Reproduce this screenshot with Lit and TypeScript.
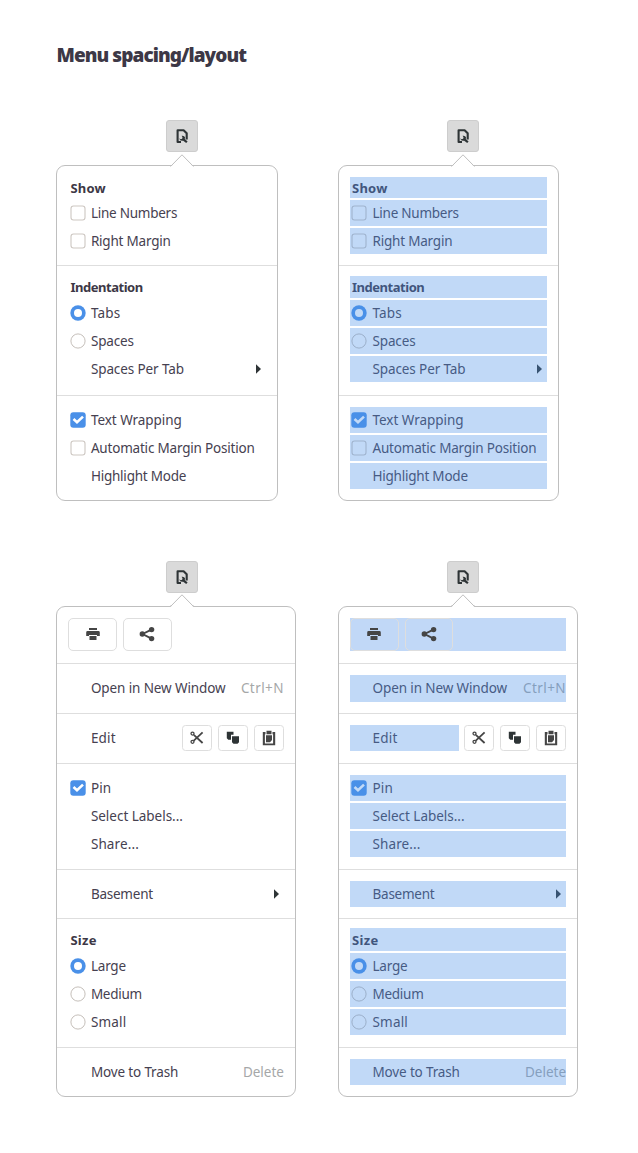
import { LitElement, html, svg, css, nothing } from "lit";
import { customElement, property } from "lit/decorators.js";
import { classMap } from "lit/directives/class-map.js";
import { styleMap } from "lit/directives/style-map.js";

type Mark = "check" | "checked" | "radio" | "selected";
interface Row {
  kind?: "item" | "header" | "toolbar" | "edit";
  label?: string;
  w?: number;
  mark?: Mark;
  arrow?: boolean;
  accel?: string;
  accelW?: number;
  h?: number;
}
interface Section { height: number; pad: number; rows: Row[] }

const settings: Section[] = [
  { height: 98.4, pad: 11.3, rows: [
    { kind: "header", label: "Show", w: 35.5, h: 20.7 },
    { label: "Line Numbers", w: 86.3, mark: "check" },
    { label: "Right Margin", w: 79.8, mark: "check" },
  ] },
  { height: 128.3, pad: 9.4, rows: [
    { kind: "header", label: "Indentation", w: 72.3, h: 22.2 },
    { label: "Tabs", w: 29.5, mark: "selected" },
    { label: "Spaces", w: 43, mark: "radio" },
    { label: "Spaces Per Tab", w: 93, arrow: true },
  ] },
  { height: 104.2, pad: 10.9, rows: [
    { label: "Text Wrapping", w: 91, mark: "checked" },
    { label: "Automatic Margin Position", w: 163.8, mark: "check" },
    { label: "Highlight Mode", w: 95.3 },
  ] },
];

const actions: Section[] = [
  { height: 55.9, pad: 11, rows: [{ kind: "toolbar", h: 33.6 }] },
  { height: 48.7, pad: 11, rows: [{ label: "Open in New Window", w: 134.6, accel: "Ctrl+N", accelW: 43 }] },
  { height: 48.7, pad: 11, rows: [{ kind: "edit", label: "Edit", w: 25 }] },
  { height: 104.9, pad: 10.8, rows: [
    { label: "Pin", w: 20.5, mark: "checked" },
    { label: "Select Labels...", w: 92 },
    { label: "Share...", w: 48 },
  ] },
  { height: 48.7, pad: 11, rows: [{ label: "Basement", w: 62, arrow: true }] },
  { height: 127.3, pad: 9, rows: [
    { kind: "header", label: "Size", w: 26.5, h: 22.6 },
    { label: "Large", w: 35, mark: "selected" },
    { label: "Medium", w: 51, mark: "radio" },
    { label: "Small", w: 35.5, mark: "radio" },
  ] },
  { height: 48.5, pad: 11, rows: [{ label: "Move to Trash", w: 87.3, accel: "Delete", accelW: 41 }] },
];

/** A single line of text whose tracking is tuned to a given width. */
@customElement("tracked-text")
class TrackedText extends LitElement {
  @property() text = "";
  @property({ type: Number }) w = 0;
  static styles = css`
    :host { display: block; white-space: nowrap; flex: none; }
    .run { display: inline-block; white-space: pre; }
  `;
  updated() {
    const run = this.renderRoot.querySelector(".run") as HTMLElement;
    run.style.letterSpacing = "0px";
    const natural = run.getBoundingClientRect().width;
    if (this.w) run.style.letterSpacing = `${(this.w - natural) / this.text.length}px`;
  }
  render() { return html`<span class="run">${this.text}</span>`; }
}

const glyphs = {
  print: svg`<path fill="#454545" d="M4 2h8v2H4zM2.600 5h10.800q1.400 0 1.400 1.400V10H12V9H4v1H1.200V6.400Q1.200 5 2.600 5zM4.500 10h7v4h-7z"/>`,
  share: svg`<path d="M12.500 3.600 3.600 8l8.900 4.600" stroke="#454545" stroke-width="1.900" fill="none"/><circle cx="12.600" cy="3.600" r="2.700" fill="#454545"/><circle cx="3.300" cy="8" r="2.700" fill="#454545"/><circle cx="12.600" cy="12.600" r="2.700" fill="#454545"/>`,
  cut: svg`<g fill="none" stroke="#454545"><circle cx="3.500" cy="3.600" r="1.500" stroke-width="1.300"/><circle cx="3.500" cy="11.800" r="1.500" stroke-width="1.300"/><path d="M4.800 4.800 13.600 13M4.800 10.600 13.600 2.400" stroke-width="1.800"/></g>`,
  copy: svg`<path fill="#2e3436" d="M1.800 1.800h6.700v3H6v5H3.300L1.800 8.300zM7 6.300h7v6L12.500 13.800h-4L7 12.300z"/>`,
  paste: svg`<path fill="#454545" d="M1.800 2h2.700v2.200H3.900v9.300h8.200V4.200h-.600V2h2.700v13.300H1.800zM5.500 .800h5v3.400h-5zM5 5.200h6V10l-2 2.300H5z"/>`,
};

const icon = (g: unknown) => html`<svg class="glyph" viewBox="0 0 16 16">${g}</svg>`;

@customElement("menu-popover")
class MenuPopover extends LitElement {
  @property({ attribute: false }) sections: Section[] = [];
  @property({ type: Number }) w = 221;
  @property({ type: Number }) rowWidth = 197;
  @property({ type: Number }) inset = 11;
  @property({ type: Number }) tip = 125.5;
  @property({ type: Boolean }) overlay = false;

  static styles = css`
    :host { display: block; font-family: "Noto Sans", sans-serif; font-size: 13.500px; color: #464150; }
    * { box-sizing: border-box; }
    .trigger { width: 32px; height: 32px; border: 1px solid #cdcdcd; border-radius: 3px; background: #dadada;
      display: flex; align-items: center; justify-content: center; }
    .trigger svg { width: 16px; height: 16px; display: block; }
    .panel { position: relative; margin-top: 13px; border: 1px solid #bfbfbf; border-radius: 9px; background: #fff; }
    .notch { position: absolute; top: -12.500px; width: 24px; height: 13px; display: block; }
    .section { display: flex; flex-direction: column; gap: 2px; }
    .section + .section { border-top: 1px solid #dedede; }
    .row { position: relative; height: 26.150px; display: flex; align-items: center; flex: none; }
    .overlay .item::after, .overlay .header::after, .overlay .edit .lead::after {
      content: ""; position: absolute; inset: 0; background: rgba(74, 144, 232, 0.34); }
    .header { font-weight: 700; padding-left: 2px; font-size: 13px; color: #3d3846; }
    .markbox { width: 22.500px; padding-left: 1.300px; flex: none; }
    .mark { width: 16px; height: 16px; display: block; }
    .spacer { flex: 1; }
    .accel { color: #a5a7a8; }
    .arrow { width: 5px; height: 10px; margin-right: 4.700px; display: block; }
    .toolbar { gap: 6px; }
    .overlay .toolbar { background: #c1d8f7; }
    .btn { border: 1px solid #dedede; border-radius: 5px; display: flex; align-items: center; justify-content: center; flex: none; }
    .btn.large { width: 48.700px; height: 33.600px; }
    .btn.small { width: 30px; height: 26px; border-radius: 3.500px; }
    .glyph { width: 16px; height: 16px; display: block; }
    .edit { gap: 5.800px; }
    .lead { position: relative; flex: 1; height: 100%; display: flex; align-items: center; }
  `;

  mark(m?: Mark) {
    const shape =
      m === "check" ? svg`<rect x="1" y="1" width="14" height="14" rx="2.500" fill="#fff" stroke="#cdc7c2" stroke-width="1.100"/>`
      : m === "radio" ? svg`<circle cx="8" cy="8" r="7.100" fill="#fff" stroke="#c5bfba" stroke-width="1"/>`
      : m === "selected" ? svg`<circle cx="8" cy="8" r="7.700" fill="#4a90e8"/><circle cx="8" cy="8" r="4" fill="#fff"/>`
      : m === "checked" ? svg`<rect x=".300" y=".300" width="15.400" height="15.400" rx="3" fill="#4a90e8"/><path d="M3.500 7 7 10.200 13 4.600" fill="none" stroke="#fff" stroke-width="2.600"/>`
      : nothing;
    return html`<span class="markbox">${m ? html`<svg class="mark" viewBox="0 0 16 16">${shape}</svg>` : nothing}</span>`;
  }

  row(r: Row) {
    const kind = r.kind ?? "item";
    const style = styleMap({ width: `${this.rowWidth}px`, ...(r.h ? { height: `${r.h}px` } : {}) });
    const text = html`<tracked-text .text=${r.label ?? ""} .w=${r.w ?? 0}></tracked-text>`;
    if (kind === "toolbar")
      return html`<div class="row toolbar" style=${style}>
        <span class="btn large">${icon(glyphs.print)}</span><span class="btn large">${icon(glyphs.share)}</span></div>`;
    if (kind === "header") return html`<div class="row header" style=${style}>${text}</div>`;
    if (kind === "edit")
      return html`<div class="row edit" style=${style}><span class="lead">${this.mark()}${text}</span>
        ${[glyphs.cut, glyphs.copy, glyphs.paste].map((g) => html`<span class="btn small">${icon(g)}</span>`)}</div>`;
    return html`<div class="row item" style=${style}>${this.mark(r.mark)}${text}<span class="spacer"></span>
      ${r.arrow ? html`<svg class="arrow" viewBox="0 0 5 10"><path d="M0 .300 5 5 0 9.700z" fill="#2e3436"/></svg>` : nothing}
      ${r.accel ? html`<tracked-text class="accel" .text=${r.accel} .w=${r.accelW ?? 0}></tracked-text>` : nothing}</div>`;
  }

  render() {
    return html`
      <div class="trigger" style=${styleMap({ marginLeft: `${this.tip - 16}px` })}>
        <svg viewBox="0 0 16 16"><path d="M7 14H3.600V2.200H9.600L12.700 5.300V11.500" fill="none" stroke="#2e3436" stroke-width="2.100" stroke-linejoin="round"/>
          <path d="M5.200 10.200 6.600 11.200 8.200 10.700 8.500 9.200 7.600 7.700Q10.300 7.300 11 9.300L10.800 11 13.600 13.500 12.200 15 9.200 12.700Q5.900 13.500 5.200 10.200z" fill="#2e3436"/></svg>
      </div>
      <div class=${classMap({ panel: true, overlay: this.overlay })} style=${styleMap({ width: `${this.w}px` })}>
        <svg class="notch" viewBox="0 0 24 13" style=${styleMap({ left: `${this.tip - 13}px` })}>
          <path d="M.500 13 12 1.500 23.500 13z" fill="#fff"/><path d="M0 12H1L12 .800 23 12h1" fill="none" stroke="#bfbfbf"/></svg>
        ${this.sections.map((s) => html`<div class="section"
          style=${styleMap({ height: `${s.height + 1}px`, padding: `${s.pad}px 0 0 ${this.inset}px` })}>${s.rows.map((r) => this.row(r))}</div>`)}
      </div>`;
  }
}

@customElement("app-root")
class AppRoot extends LitElement {
  static styles = css`
    :host { display: block; width: 638px; height: 1153px; background: #fff; overflow: hidden; }
    .title { margin: 0; padding: 41px 0 0 56.500px; height: 120px; box-sizing: border-box;
      font: 900 19px/28px "Noto Sans", sans-serif; color: #3d3846; }
    .grid { display: grid; grid-template-columns: 282px 300px; grid-template-rows: 440.500px auto; padding-left: 56px; }
  `;
  render() {
    return html`
      <h1 class="title"><tracked-text .text=${"Menu spacing/layout"} .w=${189.5}></tracked-text></h1>
      <div class="grid">
        <menu-popover .sections=${settings} .w=${222} .rowWidth=${197} .inset=${11.4} .tip=${126}></menu-popover>
        <menu-popover .sections=${settings} .w=${221} .rowWidth=${197} .inset=${11} .tip=${125.4} overlay></menu-popover>
        <menu-popover .sections=${actions} .w=${240.4} .rowWidth=${215.5} .inset=${11.4} .tip=${126}></menu-popover>
        <menu-popover .sections=${actions} .w=${240} .rowWidth=${216} .inset=${11} .tip=${125.4} overlay></menu-popover>
      </div>`;
  }
}
